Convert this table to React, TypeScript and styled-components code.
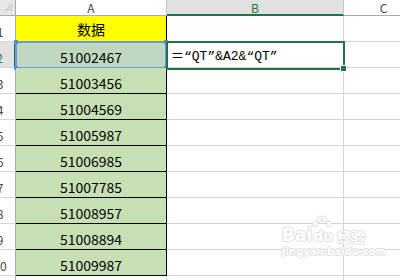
import React from "react";
import styled, { createGlobalStyle, css } from "styled-components";

const Global = createGlobalStyle`
  html, body { margin: 0; padding: 0; background: #fff; overflow: hidden; }
  body { width: 400px; height: 280px; }
`;

const GREEN = "#217346";
const GRID = "#d4d4d4";

const Page = styled.div`
  position: relative;
  width: 400px;
  height: 280px;
  overflow: hidden;
`;

const Sheet = styled.div`
  display: grid;
  grid-template-columns: 31px 151px 177px 80px;
  grid-template-rows: 16px repeat(11, 26px);
  margin-left: -15px;
  font-family: "Noto Sans CJK SC", sans-serif;
`;

const Corner = styled.div`
  position: relative;
  background: #e6e6e6;
  border-right: 1px solid #ababab;
  border-bottom: 1px solid #ababab;
  box-sizing: border-box;
  &::after {
    content: "";
    position: absolute;
    right: 3px;
    bottom: 4px;
    width: 0;
    height: 0;
    border-left: 8px solid transparent;
    border-bottom: 8px solid #d3d3d3;
  }
`;

const ColHead = styled.div<{ $sel?: boolean }>`
  box-sizing: border-box;
  display: flex;
  align-items: center;
  justify-content: center;
  font-size: 12px;
  line-height: 1;
  color: #444;
  background: #fff;
  border-right: 1px solid #c6c6c6;
  border-bottom: 1px solid #ababab;
  padding-top: 1px;
  ${(p) =>
    p.$sel &&
    css`
      background: #e1e1e1;
      color: ${GREEN};
      border-bottom: 2px solid ${GREEN};
    `}
`;

const RowHead = styled.div<{ $sel?: boolean }>`
  box-sizing: border-box;
  display: flex;
  align-items: flex-end;
  justify-content: center;
  padding-bottom: 3px;
  font-size: 12px;
  line-height: 1;
  color: #444;
  background: #fff;
  border-right: 1px solid #ababab;
  border-bottom: 1px solid ${GRID};
  ${(p) =>
    p.$sel &&
    css`
      background: #e1e1e1;
      color: ${GREEN};
      border-right: 2px solid ${GREEN};
    `}
`;

const Cell = styled.div<{ $fill?: string; $dark?: boolean }>`
  position: relative;
  box-sizing: border-box;
  display: flex;
  align-items: flex-end;
  background: ${(p) => p.$fill || "#fff"};
  border-right: 1px solid ${(p) => (p.$dark ? "#000" : GRID)};
  border-bottom: 1px solid ${(p) => (p.$dark ? "#000" : GRID)};
`;

const Num = styled.span`
  flex: 1;
  text-align: center;
  font-family: "Noto Sans CJK SC", sans-serif;
  font-size: 14px;
  line-height: 14px;
  padding-bottom: 3px;
  color: #000;
`;

const Title = styled(Num)`
  font-size: 14px;
  padding-bottom: 5px;
`;

const Formula = styled.span`
  padding-left: 4px;
  padding-bottom: 4px;
  font-family: "Liberation Mono", "Noto Sans CJK SC", monospace;
  font-size: 13px;
  line-height: 13px;
  color: #000;
  white-space: nowrap;
`;

const RefBox = styled.div`
  position: absolute;
  top: -1px;
  left: -1px;
  right: -1px;
  bottom: -2px;
  border: 2px solid #6a98e0;
  pointer-events: none;
`;

const Handle = styled.i<{ $x: "l" | "r"; $y: "t" | "b" }>`
  position: absolute;
  width: 4px;
  height: 4px;
  background: #5b8ad8;
  ${(p) => (p.$x === "l" ? "left: -3px;" : "right: -3px;")}
  ${(p) => (p.$y === "t" ? "top: -3px;" : "bottom: -3px;")}
`;

const ActiveBox = styled.div`
  position: absolute;
  top: -1px;
  left: -1px;
  right: -2px;
  bottom: -3px;
  border: 2px solid ${GREEN};
  z-index: 2;
  pointer-events: none;
`;

const FillHandle = styled.i`
  position: absolute;
  right: -4px;
  bottom: -4px;
  width: 5px;
  height: 5px;
  background: ${GREEN};
  border: 1px solid #fff;
`;

const Watermark = styled.div`
  position: absolute;
  left: 282px;
  top: 226px;
  display: flex;
  flex-direction: column;
  align-items: flex-start;
  gap: 2px;
  color: #fff;
  font-family: "DejaVu Sans", sans-serif;
  font-weight: bold;
  opacity: 0.9;
  pointer-events: none;
`;

const MarkTop = styled.div`
  display: flex;
  align-items: flex-end;
  gap: 1px;
  font-size: 17px;
  line-height: 18px;
  text-shadow: 1px 0 #dcdcdc, -1px 0 #dcdcdc, 0 1px #dcdcdc, 0 -1px #dcdcdc;
`;

const Paw = styled.span`
  position: relative;
  display: inline-flex;
  align-items: flex-end;
  font-size: 14px;
  line-height: 16px;
  & > svg {
    position: absolute;
    left: -2px;
    top: -13px;
  }
`;

const MarkCn = styled.span`
  font-family: "Noto Sans CJK SC", sans-serif;
  font-size: 14px;
  line-height: 16px;
  margin-left: 3px;
`;

const MarkUrl = styled.div`
  font-size: 10px;
  line-height: 11px;
  text-shadow: 1px 0 #dcdcdc, -1px 0 #dcdcdc, 0 1px #dcdcdc, 0 -1px #dcdcdc;
`;

const values = [
  "51002467",
  "51003456",
  "51004569",
  "51005987",
  "51006985",
  "51007785",
  "51008957",
  "51008894",
  "51009987",
];

export default function App() {
  return (
    <Page>
      <Global />
      <Sheet>
        <Corner />
        <ColHead>A</ColHead>
        <ColHead $sel>B</ColHead>
        <ColHead>C</ColHead>

        <RowHead>1</RowHead>
        <Cell $fill="#ffff00" $dark>
          <Title>数据</Title>
        </Cell>
        <Cell />
        <Cell />

        {values.map((v, i) => {
          const row = i + 2;
          const first = i === 0;
          return (
            <React.Fragment key={v}>
              <RowHead $sel={first}>{row}</RowHead>
              <Cell $fill={first ? "#bfd7bf" : "#c6e0b4"} $dark>
                <Num>{v}</Num>
                {first && (
                  <RefBox>
                    <Handle $x="l" $y="t" />
                    <Handle $x="r" $y="t" />
                    <Handle $x="l" $y="b" />
                    <Handle $x="r" $y="b" />
                  </RefBox>
                )}
              </Cell>
              <Cell>
                {first && (
                  <>
                    <Formula>＝“QT”&amp;A2&amp;“QT”</Formula>
                    <ActiveBox>
                      <FillHandle />
                    </ActiveBox>
                  </>
                )}
              </Cell>
              <Cell />
            </React.Fragment>
          );
        })}

        <RowHead>11</RowHead>
        <Cell />
        <Cell />
        <Cell />
      </Sheet>

      <Watermark>
        <MarkTop>
          <span>Bai</span>
          <Paw>
            <svg width="22" height="16" viewBox="0 0 22 16">
              <g fill="#fff" stroke="#dcdcdc" strokeWidth="1">
                <ellipse cx="4" cy="9" rx="2.5" ry="3" />
                <ellipse cx="8.5" cy="4" rx="2.5" ry="3" />
                <ellipse cx="13.5" cy="4" rx="2.5" ry="3" />
                <ellipse cx="18" cy="9" rx="2.5" ry="3" />
              </g>
            </svg>
            du
          </Paw>
          <MarkCn>经验</MarkCn>
        </MarkTop>
        <MarkUrl>jingyan.baidu.com</MarkUrl>
      </Watermark>
    </Page>
  );
}
